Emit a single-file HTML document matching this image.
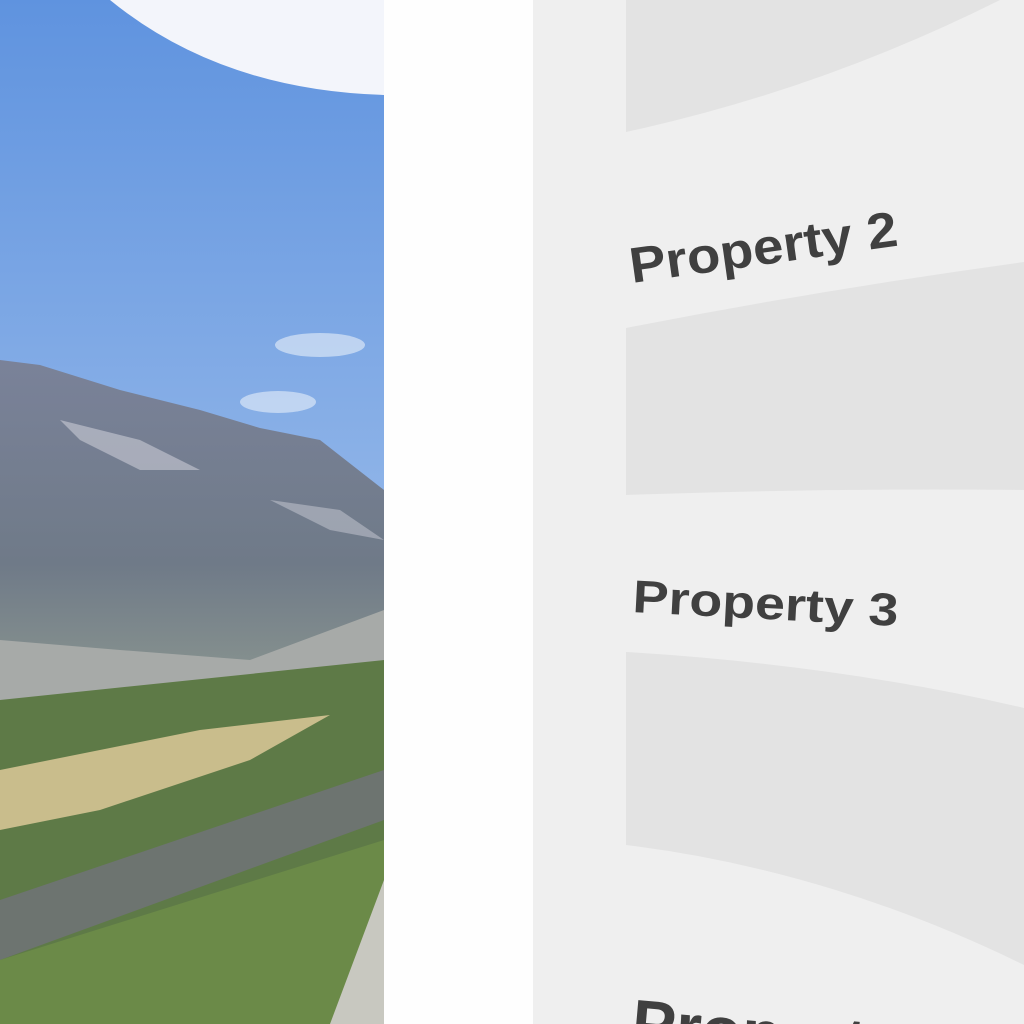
<!DOCTYPE html>
<html><head><style>
html,body{margin:0;padding:0;width:1024px;height:1024px;overflow:hidden;background:#fff}
svg{display:block}
</style></head><body>
<svg width="1024" height="1024" viewBox="0 0 1024 1024" xmlns="http://www.w3.org/2000/svg" style="position:absolute;left:0;top:0;overflow:hidden">
<defs>
<linearGradient id="sky" x1="0" y1="0" x2="0" y2="1">
<stop offset="0" stop-color="#5f93df"/><stop offset="0.5" stop-color="#8fb4e8"/><stop offset="1" stop-color="#b4cdee"/>
</linearGradient>
<linearGradient id="mtn" x1="0" y1="0" x2="0" y2="1">
<stop offset="0" stop-color="#7a8299"/><stop offset="0.6" stop-color="#6f7a88"/><stop offset="1" stop-color="#8c9790"/>
</linearGradient>
</defs>
<rect x="0" y="0" width="384" height="1024" fill="url(#sky)"/>
<ellipse cx="320" cy="345" rx="45" ry="12" fill="#d9e6f6" opacity="0.7"/>
<ellipse cx="278" cy="402" rx="38" ry="11" fill="#d9e6f6" opacity="0.7"/>
<path d="M0 360 L40 365 L120 390 L200 410 L260 428 L320 440 L384 490 L384 700 L0 700Z" fill="url(#mtn)"/>
<path d="M60 420 L140 440 L200 470 L140 470 L80 440Z" fill="#c9ccd6" opacity="0.6"/>
<path d="M270 500 L340 510 L384 540 L330 530Z" fill="#c9ccd6" opacity="0.5"/>
<path d="M0 640 L120 650 L250 660 L384 610 L384 700 L0 720Z" fill="#a7aaa8"/>
<path d="M0 700 L384 660 L384 1024 L0 1024Z" fill="#5e7a47"/>
<path d="M0 770 L200 730 L330 715 L250 760 L100 810 L0 830Z" fill="#c9bd8c"/>
<path d="M0 900 L384 770 L384 820 L0 960Z" fill="#6d7470"/>
<path d="M0 960 L384 840 L384 1024 L0 1024Z" fill="#6b8a48"/>
<path d="M330 1024 L384 880 L384 1024Z" fill="#c8c8c0"/>
<path d="M110 0 Q220 90 384 95 L384 0Z" fill="#f3f5fb"/>
<rect x="384" y="0" width="149" height="1024" fill="#fefefe"/>
<rect x="533" y="0" width="491" height="1024" fill="#efefef"/>
<path d="M626 0 L1000 0 Q820 90 626 132Z" fill="#e3e3e3"/>
<path d="M626 328 Q820 290 1024 262 L1024 490 Q820 488 626 495Z" fill="#e3e3e3"/>
<path d="M626 652 Q840 665 1024 708 L1024 965 Q830 870 626 845Z" fill="#e3e3e3"/>
<g font-family="Liberation Sans, sans-serif" font-weight="bold" fill="#404040">
<text x="632" y="283" font-size="50" textLength="270" lengthAdjust="spacingAndGlyphs" transform="rotate(-8 632 283)">Property 2</text>
<text x="632" y="612" font-size="46" textLength="266" lengthAdjust="spacingAndGlyphs" transform="rotate(3 632 612)">Property 3</text>
<text x="630" y="1045" font-size="66" transform="rotate(5 630 1045)">Property 4</text>
</g>
</svg>
</body></html>
